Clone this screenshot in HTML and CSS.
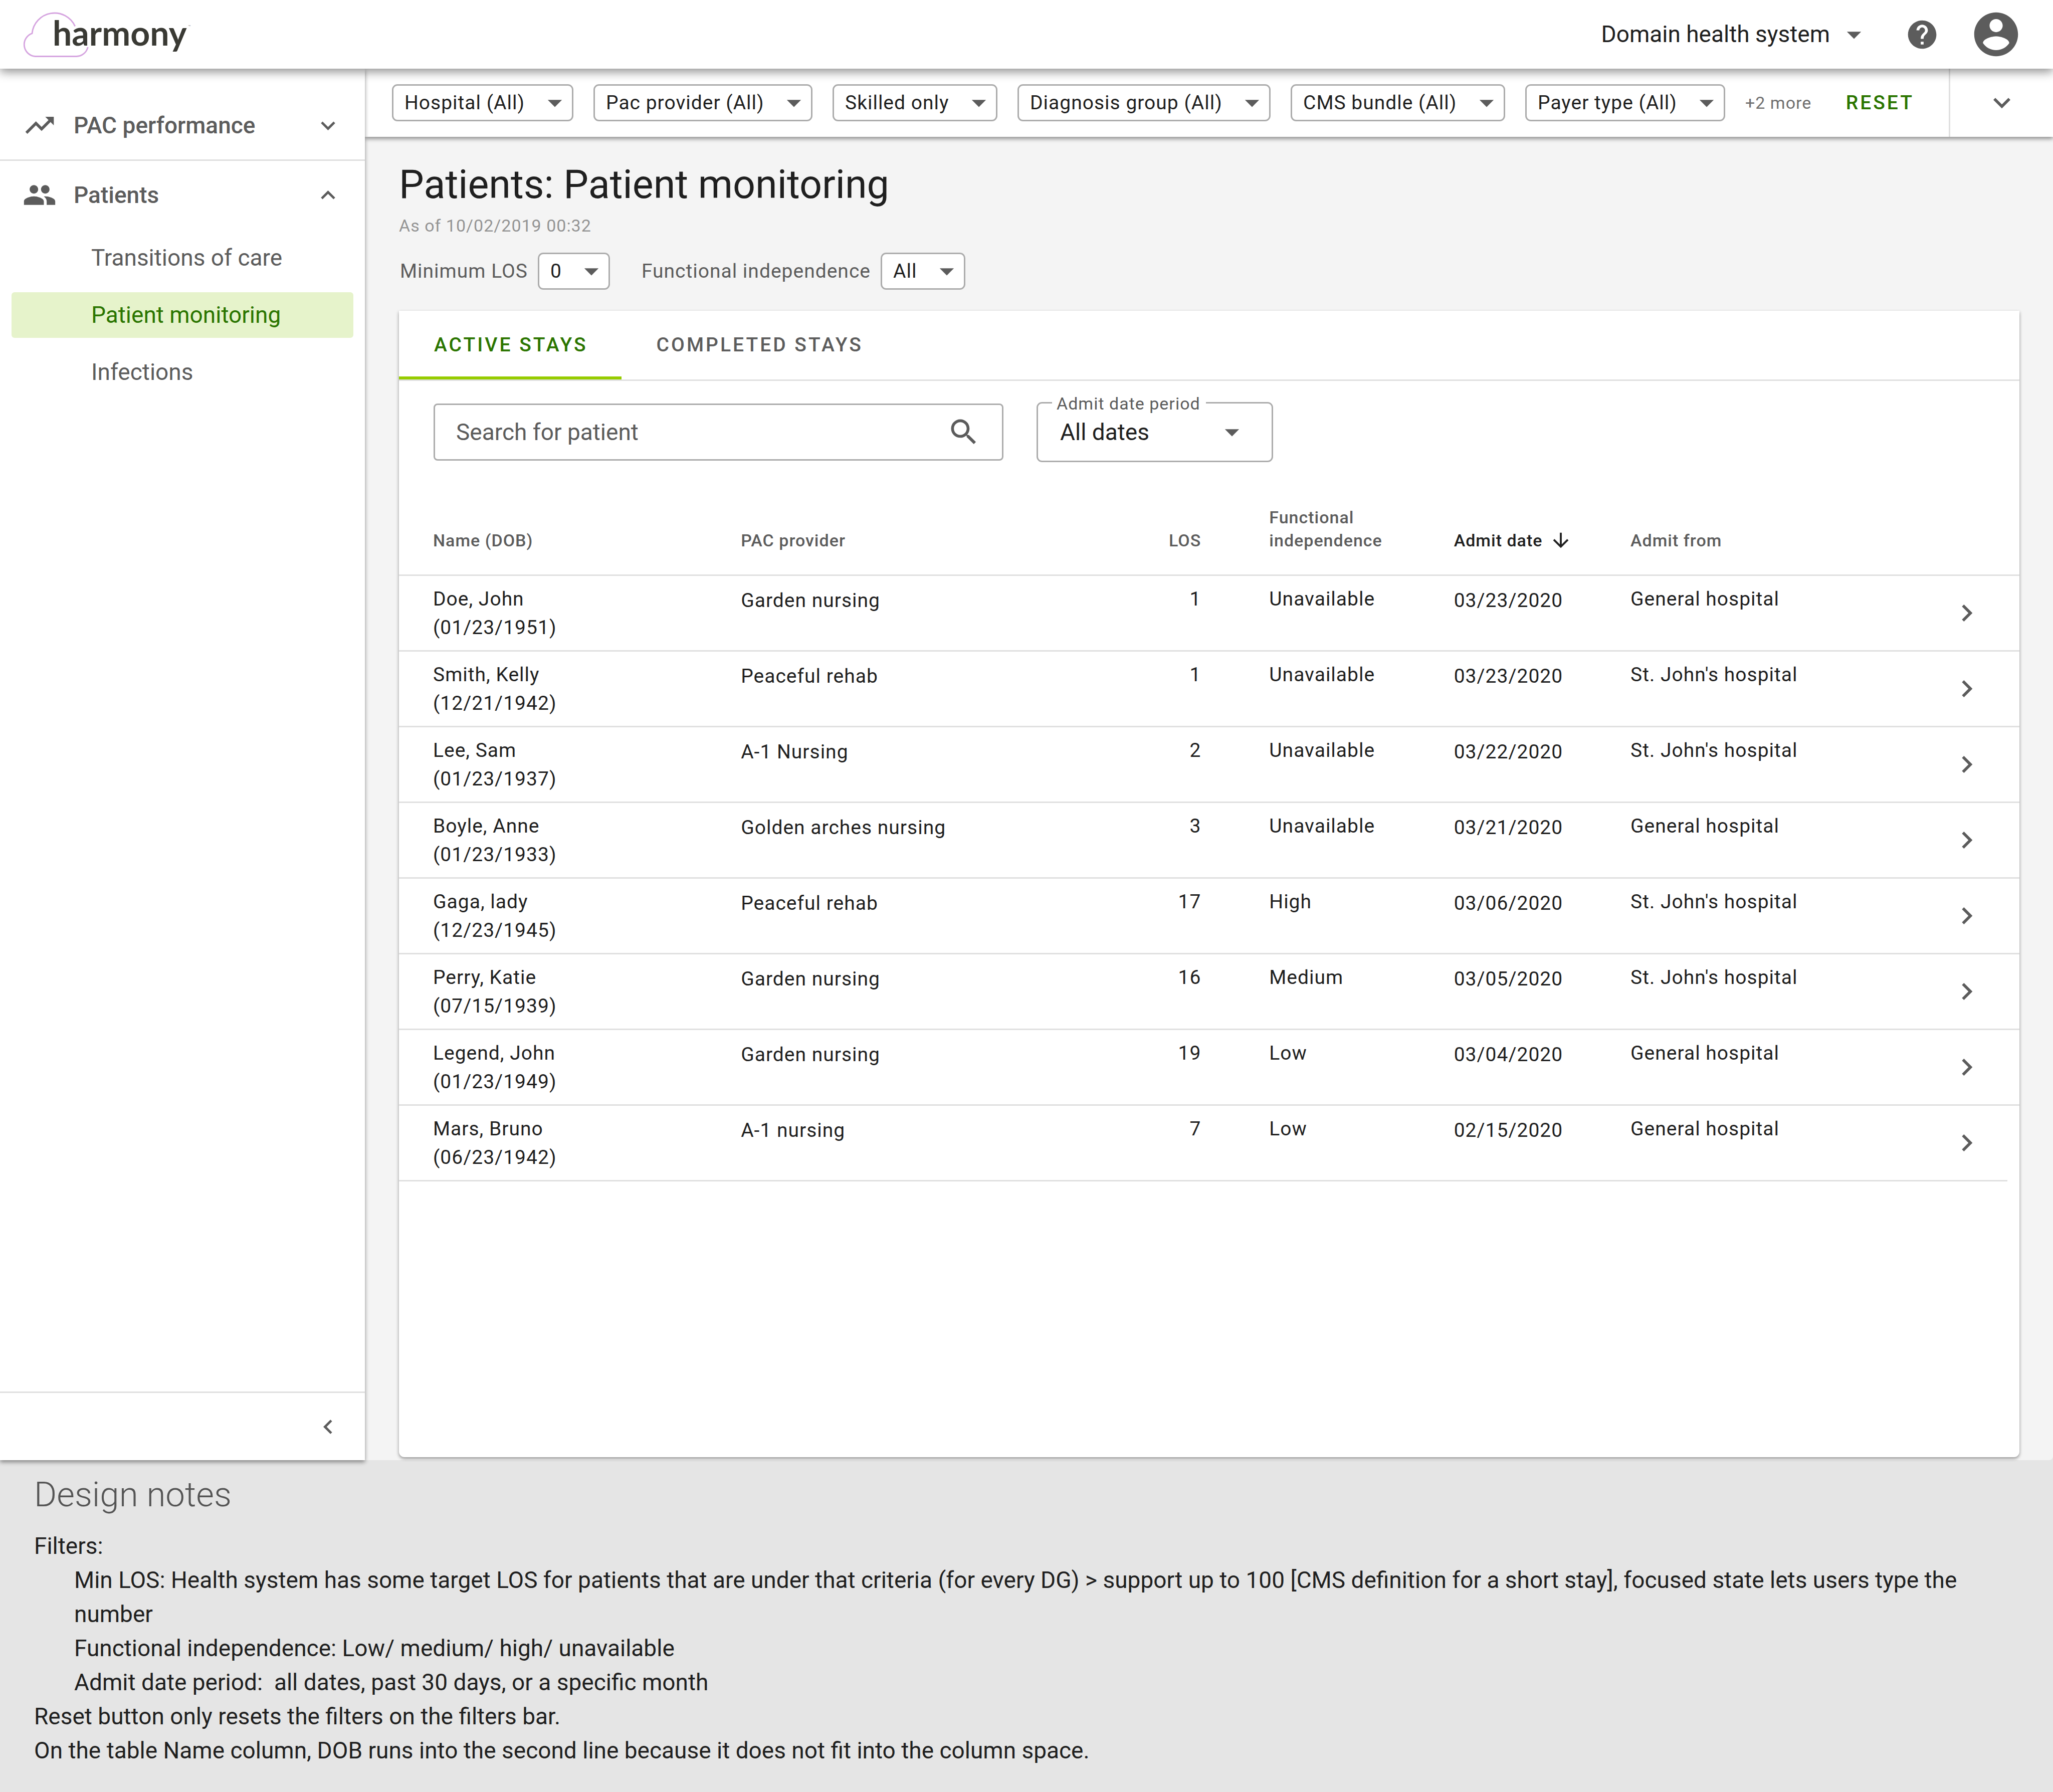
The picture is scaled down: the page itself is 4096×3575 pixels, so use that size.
FILE: index.html
```html
<!DOCTYPE html>
<html lang="en">
<head>
<meta charset="utf-8">
<meta name="viewport" content="width=device-width, initial-scale=1">
<title>Harmony – Patient monitoring</title>
<link rel="stylesheet" href="styles.css">
</head>
<body>
<svg class="sprite" aria-hidden="true">
  <symbol id="i-drop" viewBox="0 0 24 24"><path d="M7 10l5 5 5-5z"/></symbol>
  <symbol id="i-more" viewBox="0 0 24 24"><path d="M7.41 8.59 12 13.17l4.59-4.58L18 10l-6 6-6-6z"/></symbol>
  <symbol id="i-less" viewBox="0 0 24 24"><path d="M12 8l-6 6 1.41 1.41L12 10.83l4.59 4.58L18 14z"/></symbol>
  <symbol id="i-left" viewBox="0 0 24 24"><path d="M15.41 7.41 14 6l-6 6 6 6 1.41-1.41L10.83 12z"/></symbol>
  <symbol id="i-right" viewBox="0 0 24 24"><path d="M10 6 8.59 7.41 13.17 12l-4.58 4.59L10 18l6-6z"/></symbol>
</svg>

<header class="topbar">
  <a class="logo" href="#" aria-label="harmony home">
    <svg class="logo-cloud" viewBox="0 0 150 104" aria-hidden="true"><path d="M118 35A47.500 47.500 0 0 0 27.500 50A25 25 0 0 0 34 98.500H121A25 25 0 0 0 145 79"/></svg>
    <span class="logo-text">harmony</span><span class="logo-tm">™</span>
  </a>
  <div class="topbar-right">
    <button class="domain" type="button">Domain health system <svg class="icon"><use href="#i-drop"/></svg></button>
    <button class="icon-button" type="button" aria-label="Help"><svg class="icon" viewBox="0 0 24 24"><path d="M12 2C6.480 2 2 6.480 2 12s4.480 10 10 10 10-4.480 10-10S17.520 2 12 2zm1 17h-2v-2h2v2zm2.070-7.750l-.9.920C13.450 12.900 13 13.500 13 15h-2v-.5c0-1.100.450-2.100 1.170-2.830l1.240-1.260c.370-.360.590-.860.590-1.410 0-1.100-.9-2-2-2s-2 .9-2 2H8c0-2.210 1.790-4 4-4s4 1.790 4 4c0 .880-.360 1.680-.930 2.250z"/></svg></button>
    <button class="icon-button" type="button" aria-label="Account"><svg class="icon icon-account" viewBox="0 0 24 24"><path d="M12 2C6.480 2 2 6.480 2 12s4.480 10 10 10 10-4.480 10-10S17.520 2 12 2zm0 3c1.660 0 3 1.340 3 3s-1.340 3-3 3-3-1.340-3-3 1.340-3 3-3zm0 14.200c-2.500 0-4.710-1.280-6-3.220.030-1.990 4-3.080 6-3.080 1.990 0 5.970 1.090 6 3.080-1.290 1.940-3.500 3.220-6 3.220z"/></svg></button>
  </div>
</header>

<div class="shell">
  <nav class="sidebar" aria-label="Main">
    <button class="nav-group" type="button" aria-expanded="false">
      <svg class="icon" viewBox="0 0 24 24"><path d="M16 6l2.290 2.290-4.880 4.880-4-4L2 16.590 3.410 18l6-6 4 4 6.300-6.290L22 12V6z"/></svg>
      <span class="nav-label">PAC performance</span>
      <svg class="icon icon-small"><use href="#i-more"/></svg>
    </button>
    <button class="nav-group nav-group-divided" type="button" aria-expanded="true">
      <svg class="icon" viewBox="0 0 24 24"><path d="M16 11c1.660 0 2.990-1.340 2.990-3S17.660 5 16 5c-1.660 0-3 1.340-3 3s1.340 3 3 3zm-8 0c1.660 0 2.990-1.340 2.990-3S9.660 5 8 5C6.340 5 5 6.340 5 8s1.340 3 3 3zm0 2c-2.330 0-7 1.170-7 3.500V19h14v-2.500c0-2.330-4.670-3.500-7-3.500zm8 0c-.290 0-.620.020-.970.050 1.160.840 1.970 1.970 1.970 3.450V19h6v-2.500c0-2.330-4.670-3.500-7-3.500z"/></svg>
      <span class="nav-label">Patients</span>
      <svg class="icon icon-small"><use href="#i-less"/></svg>
    </button>
    <ul class="nav-list">
      <li><a class="nav-link" href="#">Transitions of care</a></li>
      <li><a class="nav-link nav-link-active" href="#" aria-current="page">Patient monitoring</a></li>
      <li><a class="nav-link" href="#">Infections</a></li>
    </ul>
    <div class="nav-footer">
      <button class="icon-button" type="button" aria-label="Collapse menu"><svg class="icon icon-small"><use href="#i-left"/></svg></button>
    </div>
  </nav>

  <div class="workspace">
    <div class="filterbar">
      <div class="filters">
        <div class="select"><select aria-label="Hospital"><option>Hospital (All)</option></select><svg class="icon"><use href="#i-drop"/></svg></div>
        <div class="select"><select aria-label="Pac provider"><option>Pac provider (All)</option></select><svg class="icon"><use href="#i-drop"/></svg></div>
        <div class="select"><select aria-label="Skill level"><option>Skilled only</option></select><svg class="icon"><use href="#i-drop"/></svg></div>
        <div class="select"><select aria-label="Diagnosis group"><option>Diagnosis group (All)</option></select><svg class="icon"><use href="#i-drop"/></svg></div>
        <div class="select"><select aria-label="CMS bundle"><option>CMS bundle (All)</option></select><svg class="icon"><use href="#i-drop"/></svg></div>
        <div class="select"><select aria-label="Payer type"><option>Payer type (All)</option></select><svg class="icon"><use href="#i-drop"/></svg></div>
        <span class="more">+2 more</span>
      </div>
      <button class="reset" type="button">RESET</button>
      <button class="expand" type="button" aria-label="Show all filters"><svg class="icon"><use href="#i-more"/></svg></button>
    </div>

    <main class="content">
      <h1 class="title">Patients: Patient monitoring</h1>
      <p class="as-of">As of 10/02/2019 00:32</p>
      <div class="page-filters">
        <div class="field">
          <label for="min-los">Minimum LOS</label>
          <div class="select"><select id="min-los"><option>0</option></select><svg class="icon"><use href="#i-drop"/></svg></div>
        </div>
        <div class="field">
          <label for="independence">Functional independence</label>
          <div class="select"><select id="independence"><option>All</option></select><svg class="icon"><use href="#i-drop"/></svg></div>
        </div>
      </div>

      <section class="card">
        <div class="tabs" role="tablist">
          <button class="tab tab-active" type="button" role="tab" aria-selected="true">ACTIVE STAYS</button>
          <button class="tab" type="button" role="tab" aria-selected="false">COMPLETED STAYS</button>
        </div>
        <div class="tools">
          <div class="search">
            <input type="search" placeholder="Search for patient" aria-label="Search for patient">
            <svg class="icon" viewBox="0 0 24 24"><path d="M15.500 14h-.790l-.280-.270C15.410 12.590 16 11.110 16 9.500 16 5.910 13.090 3 9.500 3S3 5.910 3 9.500 5.910 16 9.500 16c1.610 0 3.090-.590 4.230-1.570l.270.280v.790l5 4.990L20.490 19l-4.990-5zm-6 0C7.010 14 5 11.990 5 9.500S7.010 5 9.500 5 14 7.010 14 9.500 11.990 14 9.500 14z"/></svg>
          </div>
          <div class="period">
            <label for="period">Admit date period</label>
            <select id="period"><option>All dates</option></select>
            <svg class="icon"><use href="#i-drop"/></svg>
          </div>
        </div>

        <table class="stays">
          <colgroup>
            <col class="col-name"><col class="col-provider"><col class="col-los"><col class="col-independence"><col class="col-date"><col class="col-from"><col>
          </colgroup>
          <thead>
            <tr>
              <th class="name" scope="col">Name (DOB)</th>
              <th scope="col">PAC provider</th>
              <th class="los" scope="col">LOS</th>
              <th class="independence" scope="col">Functional<br>independence</th>
              <th scope="col" aria-sort="descending"><button class="sort" type="button">Admit date <svg class="icon icon-sort" viewBox="0 0 24 24"><path d="M20 12l-1.410-1.410L13 16.170V4h-2v12.170l-5.580-5.590L4 12l8 8z"/></svg></button></th>
              <th scope="col">Admit from</th>
              <td></td>
            </tr>
          </thead>
          <tbody>
            <tr><td class="name">Doe, John<br>(01/23/1951)</td><td class="low">Garden nursing</td><td class="los">1</td><td class="independence">Unavailable</td><td class="low">03/23/2020</td><td>General hospital</td><td class="open"><a href="#" aria-label="Open Doe, John"><svg class="icon"><use href="#i-right"/></svg></a></td></tr>
            <tr><td class="name">Smith, Kelly<br>(12/21/1942)</td><td class="low">Peaceful rehab</td><td class="los">1</td><td class="independence">Unavailable</td><td class="low">03/23/2020</td><td>St. John's hospital</td><td class="open"><a href="#" aria-label="Open Smith, Kelly"><svg class="icon"><use href="#i-right"/></svg></a></td></tr>
            <tr><td class="name">Lee, Sam<br>(01/23/1937)</td><td class="low">A-1 Nursing</td><td class="los">2</td><td class="independence">Unavailable</td><td class="low">03/22/2020</td><td>St. John's hospital</td><td class="open"><a href="#" aria-label="Open Lee, Sam"><svg class="icon"><use href="#i-right"/></svg></a></td></tr>
            <tr><td class="name">Boyle, Anne<br>(01/23/1933)</td><td class="low">Golden arches nursing</td><td class="los">3</td><td class="independence">Unavailable</td><td class="low">03/21/2020</td><td>General hospital</td><td class="open"><a href="#" aria-label="Open Boyle, Anne"><svg class="icon"><use href="#i-right"/></svg></a></td></tr>
            <tr><td class="name">Gaga, lady<br>(12/23/1945)</td><td class="low">Peaceful rehab</td><td class="los">17</td><td class="independence">High</td><td class="low">03/06/2020</td><td>St. John's hospital</td><td class="open"><a href="#" aria-label="Open Gaga, lady"><svg class="icon"><use href="#i-right"/></svg></a></td></tr>
            <tr><td class="name">Perry, Katie<br>(07/15/1939)</td><td class="low">Garden nursing</td><td class="los">16</td><td class="independence">Medium</td><td class="low">03/05/2020</td><td>St. John's hospital</td><td class="open"><a href="#" aria-label="Open Perry, Katie"><svg class="icon"><use href="#i-right"/></svg></a></td></tr>
            <tr><td class="name">Legend, John<br>(01/23/1949)</td><td class="low">Garden nursing</td><td class="los">19</td><td class="independence">Low</td><td class="low">03/04/2020</td><td>General hospital</td><td class="open"><a href="#" aria-label="Open Legend, John"><svg class="icon"><use href="#i-right"/></svg></a></td></tr>
            <tr><td class="name">Mars, Bruno<br>(06/23/1942)</td><td class="low">A-1 nursing</td><td class="los">7</td><td class="independence">Low</td><td class="low">02/15/2020</td><td>General hospital</td><td class="open"><a href="#" aria-label="Open Mars, Bruno"><svg class="icon"><use href="#i-right"/></svg></a></td></tr>
          </tbody>
        </table>
      </section>
    </main>
  </div>
</div>

<footer class="notes">
  <h2 class="notes-title">Design notes</h2>
  <p>Filters:</p>
  <p class="indent">Min LOS: Health system has some target LOS for patients that are under that criteria (for every DG) &gt; support up to 100 [CMS definition for a short stay], focused state lets users type the number</p>
  <p class="indent">Functional independence: Low/ medium/ high/ unavailable</p>
  <p class="indent">Admit date period:&nbsp; all dates, past 30 days, or a specific month</p>
  <p>Reset button only resets the filters on the filters bar.</p>
  <p>On the table Name column, DOB runs into the second line because it does not fit into the column space.</p>
</footer>
</body>
</html>
```
FILE: styles.css
```css
:root {
  --ink: #1f1f1f;
  --muted: #5c5c5c;
  --faint: #949494;
  --outline: #acacac;
  --line: #e0e0e0;
  --green: #2b7500;
  --lime: #96cc00;
}

* { box-sizing: border-box; }

body {
  margin: 0;
  min-height: 100vh;
  display: flex;
  flex-direction: column;
  background: #e5e5e5;
  color: var(--ink);
  font-family: Roboto, "Liberation Sans", sans-serif;
  font-size: 39px;
  line-height: 57px;
  letter-spacing: 1px;
}

h1, h2, p, ul { margin: 0; padding: 0; }
ul { list-style: none; }
a { color: inherit; text-decoration: none; }

button, input, select {
  margin: 0;
  padding: 0;
  border: 0;
  background: none;
  color: inherit;
  font: inherit;
  letter-spacing: inherit;
}

select { appearance: none; }

.sprite { display: none; }

.icon {
  display: block;
  flex: none;
  width: 68px;
  height: 68px;
  fill: var(--muted);
  pointer-events: none;
}
.icon-small { width: 57px; height: 57px; }
.icon-account { width: 105px; height: 105px; }
.icon-sort { width: 46px; height: 46px; fill: var(--ink); }
.icon-button { display: block; }

/* Top bar */
.topbar {
  position: relative;
  z-index: 3;
  display: flex;
  align-items: center;
  justify-content: space-between;
  height: 137px;
  padding: 0 61px 0 38px;
  background: #fff;
  box-shadow: 0 7px 18px rgba(0, 0, 0, .42);
}

.logo { display: flex; align-items: flex-start; height: 137px; padding-top: 19px; }
.logo-cloud {
  width: 142px;
  height: 99px;
  margin-right: -75px;
  fill: none;
  stroke: #d6a5e0;
  stroke-width: 3;
}
.logo-text {
  color: #3a3a34;
  font-family: Lato, sans-serif;
  font-size: 68px;
  font-weight: 700;
  line-height: 92px;
  letter-spacing: 0;
}
.logo-tm { margin: 27px 0 0 3px; color: #999; font-size: 8px; line-height: 16px; }

.topbar-right { display: flex; align-items: center; font-size: 46px; letter-spacing: 0; }
.topbar-right .icon-button + .icon-button { margin-left: 61px; }
.domain { display: flex; align-items: center; gap: 14px; margin-right: 68px; }

/* Frame */
.shell { flex: 1; display: flex; position: relative; z-index: 2; }

.sidebar {
  position: relative;
  z-index: 2;
  flex: none;
  display: flex;
  flex-direction: column;
  width: 728px;
  padding-top: 45px;
  background: #fff;
  box-shadow: 0 4px 8px rgba(0, 0, 0, .42);
  color: var(--muted);
  font-size: 46px;
  letter-spacing: 0;
}
.nav-group {
  display: flex;
  align-items: center;
  height: 136px;
  padding: 0 45px;
  font-weight: 500;
  text-align: left;
}
.nav-group-divided { height: 139px; border-top: 3px solid var(--line); }
.nav-label { flex: 1; padding-left: 34px; }
.nav-list { display: grid; gap: 23px; padding: 12px 23px; }
.nav-link {
  display: block;
  padding-left: 159px;
  border-radius: 6px;
  line-height: 91px;
}
.nav-link-active { background: #e6f3cb; color: var(--green); }
.nav-footer {
  display: flex;
  align-items: center;
  justify-content: flex-end;
  height: 137px;
  margin-top: auto;
  padding-right: 45px;
  border-top: 3px solid var(--line);
}

.workspace {
  flex: 1;
  min-width: 0;
  display: flex;
  flex-direction: column;
  border-radius: 0 0 8px 0;
  background: #f4f4f4;
}

/* Filter bar */
.filterbar {
  position: relative;
  z-index: 1;
  display: flex;
  align-items: center;
  height: 136px;
  padding-left: 54px;
  background: #fff;
  box-shadow: 0 4px 8px rgba(0, 0, 0, .42);
}
.filters { display: flex; align-items: center; gap: 40px; }
.more { color: #707070; font-size: 34px; }
.reset {
  margin-left: auto;
  padding: 0 69px 0 0;
  color: var(--green);
  font-weight: 500;
  letter-spacing: 4px;
}
.expand {
  display: flex;
  align-items: center;
  justify-content: center;
  width: 208px;
  height: 136px;
  border-left: 3px solid var(--line);
}

.select { display: grid; align-items: center; }
.select > * { grid-area: 1 / 1; }
.select > .icon { justify-self: end; margin-right: 3px; }
.select select {
  height: 74px;
  padding: 0 93px 0 22px;
  border: 3px solid var(--outline);
  border-radius: 11px;
  background: #fff;
}

/* Page */
.content { flex: 1; display: flex; flex-direction: column; padding: 47px 67px 6px 68px; }
.title { font-size: 79px; font-weight: 400; line-height: 96px; letter-spacing: 0; }
.as-of { margin-top: 12px; color: var(--faint); font-size: 34px; line-height: 44px; }
.page-filters { display: flex; gap: 63px; margin-top: 32px; padding-left: 2px; color: var(--muted); }
.field { display: flex; align-items: center; gap: 20px; }
.field select { color: var(--ink); }

.card {
  flex: 1;
  margin-top: 42px;
  border-radius: 0 0 11px 11px;
  background: #fff;
  box-shadow: 0 3px 6px rgba(0, 0, 0, .4);
}

.tabs { display: flex; height: 140px; border-bottom: 3px solid var(--line); }
.tab {
  padding: 0 67px 0 70px;
  color: var(--muted);
  font-weight: 500;
  letter-spacing: 4px;
}
.tab-active { box-shadow: inset 0 -6px var(--lime); color: var(--green); }

.tools { display: flex; align-items: center; gap: 66px; padding: 42px 69px 87px; font-size: 46px; }
.search {
  display: flex;
  align-items: center;
  width: 1137px;
  height: 114px;
  padding: 0 42px;
  border: 3px solid var(--outline);
  border-radius: 8px;
}
.search input { flex: 1; min-width: 0; outline: 0; appearance: none; letter-spacing: 0; }
.search input::placeholder { color: var(--muted); opacity: 1; }

.period { position: relative; display: grid; align-items: center; }
.period select, .period .icon { grid-area: 1 / 1; }
.period .icon { justify-self: end; margin-right: 48px; }
.period select {
  width: 472px;
  height: 120px;
  padding: 0 120px 0 44px;
  border: 3px solid var(--outline);
  border-radius: 11px;
  letter-spacing: 0;
}
.period label {
  position: absolute;
  top: -20px;
  left: 31px;
  padding: 0 11px 0 9px;
  background: #fff;
  color: var(--muted);
  font-size: 34px;
  line-height: 46px;
}

/* Table */
.stays { width: 100%; border-collapse: separate; border-spacing: 0; table-layout: fixed; }
.col-name { width: 21.1%; }
.col-provider { width: 22.3%; }
.col-los { width: 6.1%; }
.col-independence { width: 15.6%; }
.col-date { width: 10.9%; }
.col-from { width: 18.7%; }

.stays th, .stays td { padding: 0; border-bottom: 3px solid var(--line); text-align: left; }
.stays thead th {
  padding-bottom: 45px;
  color: var(--muted);
  font-size: 34px;
  font-weight: 500;
  line-height: 46px;
  vertical-align: bottom;
}
.stays tbody td { padding: 18px 0 16px; vertical-align: top; }
.stays tbody .low { padding-top: 21px; }
.stays .name { padding-left: 68px; }
.stays .los { text-align: right; }
.stays .independence { padding-left: 136px; }
.stays tbody .open { padding: 0 0 0 32px; vertical-align: middle; }
.open a { display: block; width: 68px; }
.sort { display: flex; align-items: center; gap: 14px; color: var(--ink); }

/* The closing rule stops short of the card edge */
.stays tbody tr:last-child .open {
  border-bottom-color: transparent;
  background: linear-gradient(var(--line), var(--line)) left bottom / calc(100% - 24px) 3px no-repeat border-box;
}

/* Notes */
.notes { padding: 24px 68px 49px; background: #e5e5e5; font-size: 46px; line-height: 68px; letter-spacing: 0; }
.notes-title { margin-bottom: 23px; color: #555; font-size: 69px; font-weight: 300; line-height: 90px; }
.indent { padding-left: 80px; }
```
